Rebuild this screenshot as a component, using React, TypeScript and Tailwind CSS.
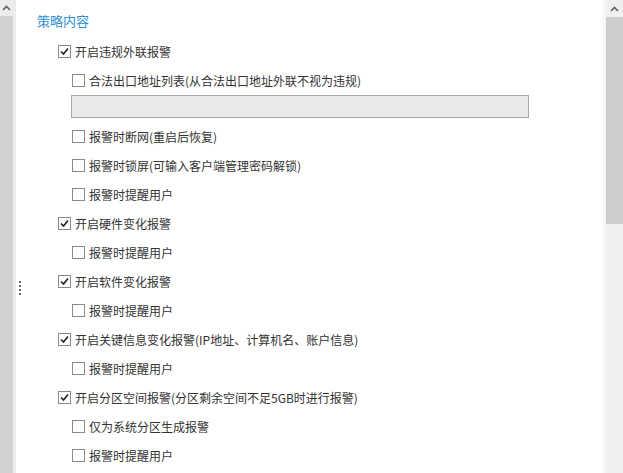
import type { ReactNode } from 'react';

// 复选框 (checkbox) 行
function Check({ checked }: { checked?: boolean }) {
    return (
        <span className="w-[13px] h-[13px] border border-[#8a8a8a] bg-white flex items-center justify-center shrink-0">
            {checked && (
                <svg width="11" height="11" viewBox="0 0 11 11">
                    <path d="M2 5.5 L4.5 8 L9 2.5" fill="none" stroke="#222" strokeWidth="1.6" />
                </svg>
            )}
        </span>
    );
}

function Row({ level, checked, children }: { level: 1 | 2; checked?: boolean; children: ReactNode }) {
    return (
        <div className={`h-[29px] flex items-center gap-[4px] ${level === 1 ? 'pl-[42px]' : 'pl-[56px]'}`}>
            <Check checked={checked} />
            <span className="text-[12px] text-[#333] leading-none">{children}</span>
        </div>
    );
}

function ArrowUp() {
    return (
        <svg width="9" height="6" viewBox="0 0 9 6">
            <path d="M1 5 L4.5 1.5 L8 5" fill="none" stroke="#606060" strokeWidth="1.6" />
        </svg>
    );
}

export default function App() {
    return (
        <div
            className="w-[623px] h-[473px] flex bg-white overflow-hidden"
            style={{ fontFamily: '"Noto Sans CJK SC", "Noto Sans", sans-serif' }}
        >
            {/* 左侧条 */}
            <div className="w-[16px] flex shrink-0">
                <div className="w-[13px] flex flex-col bg-[#d2d2d2]">
                    <div className="h-[16px] bg-[#ececec] flex items-center justify-center">
                        <ArrowUp />
                    </div>
                </div>
                <div className="w-[3px] bg-[#ececec]" />
            </div>

            {/* 主内容 */}
            <div className="flex-1 relative pt-[6px]">
                <div className="absolute left-[3px] top-[281px] flex flex-col gap-[2px]">
                    <span className="w-[2px] h-[2px] bg-[#666]" />
                    <span className="w-[2px] h-[2px] bg-[#666]" />
                    <span className="w-[2px] h-[2px] bg-[#666]" />
                    <span className="w-[2px] h-[2px] bg-[#666]" />
                </div>

                <div className="h-[31px] pt-[1px] flex items-start pl-[21px] text-[13px] text-[#2d8fd2]">
                    <span className="mt-[4px]">策略内容</span>
                </div>

                <Row level={1} checked>开启违规外联报警</Row>
                <Row level={2}>合法出口地址列表(从合法出口地址外联不视为违规)</Row>
                <div className="pl-[55px] mb-[4px]">
                    <div className="w-[458px] h-[23px] border border-[#a8a8a8] bg-[#e9e9e9]" />
                </div>
                <Row level={2}>报警时断网(重启后恢复)</Row>
                <Row level={2}>报警时锁屏(可输入客户端管理密码解锁)</Row>
                <Row level={2}>报警时提醒用户</Row>
                <Row level={1} checked>开启硬件变化报警</Row>
                <Row level={2}>报警时提醒用户</Row>
                <Row level={1} checked>开启软件变化报警</Row>
                <Row level={2}>报警时提醒用户</Row>
                <Row level={1} checked>开启关键信息变化报警(IP地址、计算机名、账户信息)</Row>
                <Row level={2}>报警时提醒用户</Row>
                <Row level={1} checked>开启分区空间报警(分区剩余空间不足5GB时进行报警)</Row>
                <Row level={2}>仅为系统分区生成报警</Row>
                <Row level={2}>报警时提醒用户</Row>
            </div>

            {/* 右侧滚动条 */}
            <div className="w-[5px] bg-gradient-to-r from-white to-[#f3f3f3] shrink-0" />
            <div className="w-[17px] flex flex-col bg-[#efefef] shrink-0">
                <div className="h-[17px] flex items-center justify-center">
                    <ArrowUp />
                </div>
                <div className="h-[207px] bg-[#cdcdcd]" />
            </div>
        </div>
    );
}
